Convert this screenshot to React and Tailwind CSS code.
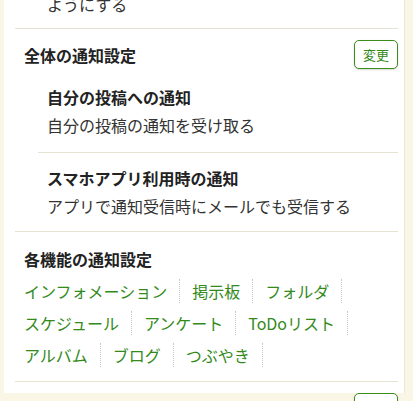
import React from "react";

const font = { fontFamily: '"Noto Sans CJK JP", "Noto Sans", sans-serif' };

function Links({ items, last }) {
  return (
    <div className="flex">
      {items.map((t, i) => (
        <a
          key={t}
          className="h-6 leading-6 text-[16px] text-[#338a1a] pr-3 mr-3 border-r border-dotted border-[#c8c8c8] whitespace-nowrap"
        >
          {t}
        </a>
      ))}
    </div>
  );
}

function ChangeButton() {
  return (
    <button className="w-[44px] h-[29px] rounded-[5px] border border-[#3a8c1c] text-[#338a1a] text-[13px] leading-none bg-white shadow-[0_1px_2px_rgba(0,0,0,0.15)] flex items-center justify-center">
      変更
    </button>
  );
}

export default function App() {
  return (
    <div className="w-[413px] h-[401px] overflow-hidden bg-[#faf6e5] pl-[4px]" style={font}>
      <div className="w-[401px] h-full bg-white border-r border-[#ebe7d3] pl-[11px] pr-[6px] text-[#333]">
        {/* top clipped item */}
        <div className="-mt-[8px] pl-[32px] pb-[12px] text-[16px] leading-6">ようにする</div>
        <div className="h-px bg-[#e6e3d3]" />

        {/* 全体の通知設定 */}
        <div className="pt-[11px]">
          <div className="flex items-center justify-between pl-[9px] h-[29px]">
            <div className="text-[16px] font-bold text-[#222]">全体の通知設定</div>
            <ChangeButton />
          </div>
          <div className="ml-[23px] mt-[14px]">
            <div className="pl-[9px] pb-[13px]">
              <div className="text-[16px] leading-[28px] font-bold text-[#222]">自分の投稿への通知</div>
              <div className="text-[16px] leading-[28px]">自分の投稿の通知を受け取る</div>
            </div>
            <div className="h-px bg-[#e6e3d3]" />
            <div className="pl-[9px] pt-[11px] pb-[11px]">
              <div className="text-[16px] leading-[28px] font-bold text-[#222]">スマホアプリ利用時の通知</div>
              <div className="text-[16px] leading-[28px]">アプリで通知受信時にメールでも受信する</div>
            </div>
          </div>
        </div>
        <div className="h-px bg-[#e6e3d3]" />

        {/* 各機能の通知設定 */}
        <div className="pl-[9px] pt-[13px] pb-[14px]">
          <div className="text-[16px] leading-[28px] font-bold text-[#222]">各機能の通知設定</div>
          <div className="mt-[6px] flex flex-col gap-y-2">
            <Links items={["インフォメーション", "掲示板", "フォルダ"]} />
            <Links items={["スケジュール", "アンケート", "ToDoリスト"]} />
            <Links items={["アルバム", "ブログ", "つぶやき"]} />
          </div>
        </div>
        <div className="h-px bg-[#e6e3d3]" />

        <div className="pt-[11px]">
          <div className="flex items-center justify-between pl-[9px] h-[29px]">
            <div className="text-[16px] font-bold text-[#222]">メールの通知設定</div>
            <ChangeButton />
          </div>
        </div>
      </div>
    </div>
  );
}
